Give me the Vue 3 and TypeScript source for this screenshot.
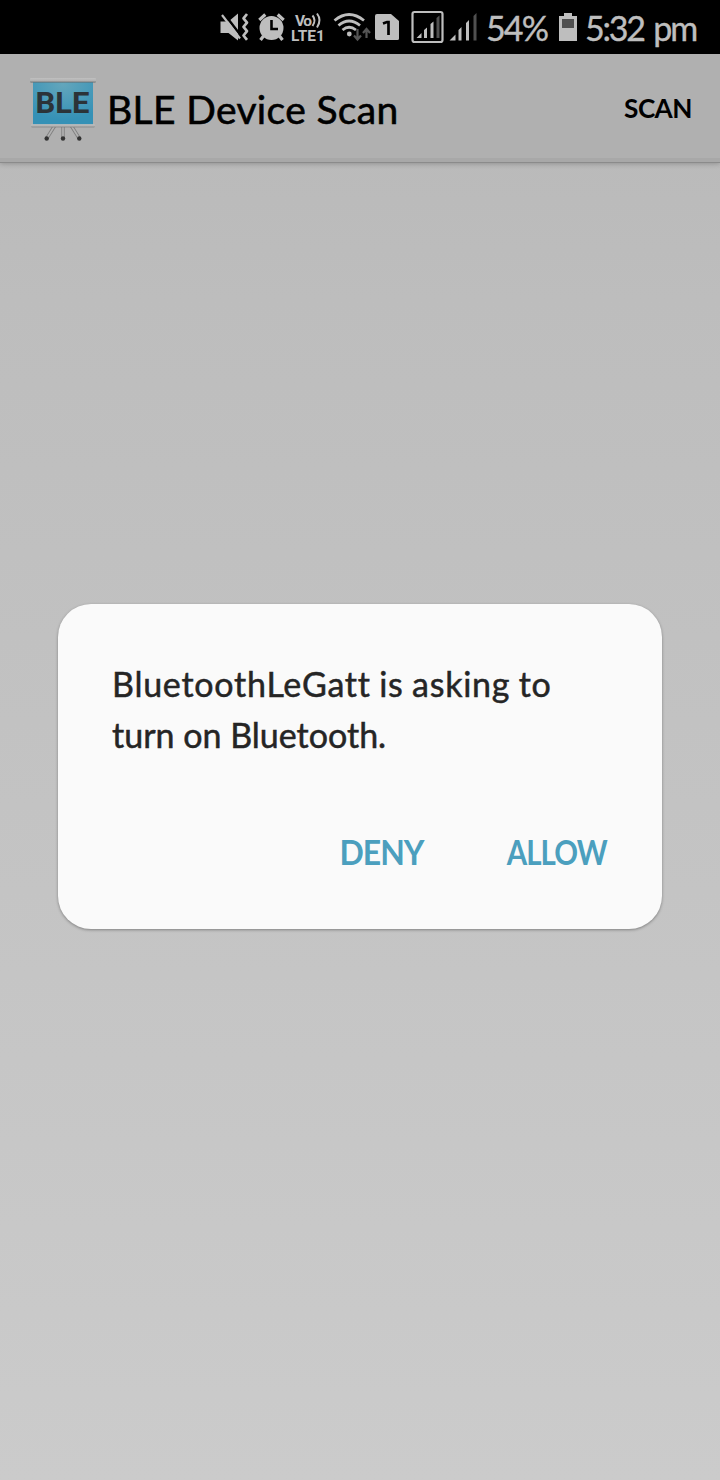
<script setup lang="ts">
import { ref } from 'vue'

const messageLines: string[] = ['BluetoothLeGatt is asking to', 'turn on Bluetooth.']
const open = ref<boolean>(true)
</script>

<template>
  <div class="screen">
    <header class="status">
      <svg class="icons" width="264" height="54" viewBox="216 0 264 54" aria-hidden="true">
        <!-- muted speaker with vibration waves -->
        <path d="M220.500 21.500h8l9.500-8v27l-9.500-7.500h-8z" fill="#bebebe" />
        <path d="M223.500 13l18 23.500" stroke="#000" stroke-width="2.500" />
        <path d="M222 15l18 23.500" stroke="#bebebe" stroke-width="2.200" />
        <path d="M247 14l-3.500 4.300 3.500 4.300-3.500 4.300 3.500 4.300-3.500 4.300 3.500 4.300" fill="none" stroke="#bebebe" stroke-width="2.700" stroke-linejoin="round" />
        <!-- alarm -->
        <circle cx="271.500" cy="28" r="12" fill="#bebebe" />
        <path d="M259.300 20l6-5.500M283.700 20l-6-5.500M263.500 36l-3 4M279.500 36l3 4" stroke="#bebebe" stroke-width="3.200" />
        <path d="M271.500 20v9h6.500" fill="none" stroke="#000" stroke-width="2.600" />
        <!-- VoLTE -->
        <text x="295" y="25.500" class="volte" textLength="17">Vo</text>
        <path d="M312.500 15.500q4 4.500 0 10.500M317 13.500q5 6.500 0 14" fill="none" stroke="#bebebe" stroke-width="2" />
        <text x="291" y="40.800" class="volte" textLength="34">LTE1</text>
        <!-- wifi -->
        <g fill="none" stroke="#bebebe" stroke-width="2.800">
          <path d="M334.500 20.500q14.500-12 29.500 0" />
          <path d="M338.500 25.500q10.500-9 21.500 0" />
          <path d="M342.500 30q6.500-5.500 13.500 0" />
        </g>
        <circle cx="349.300" cy="34" r="2.400" fill="#bebebe" />
        <path d="M357.500 29v10M354 35.500l3.500 4 3.500-4M366.500 38v-8M363 33l3.500-4 3.500 4" fill="none" stroke="#555" stroke-width="2.200" />
        <!-- SIM slot -->
        <path d="M377 14h14l8 7v17.500q0 1.500-1.500 1.500h-20.500q-2 0-2-2V16q0-2 2-2z" fill="#bebebe" />
        <path d="M383 23.500l4-1.500h1.500v13" fill="none" stroke="#000" stroke-width="2.700" />
        <!-- framed signal -->
        <rect x="412.500" y="12" width="30" height="30" rx="2" fill="none" stroke="#bebebe" stroke-width="2.200" />
        <g fill="#bebebe">
          <path d="M416.500 38l5-5v5zM424 30l3-2.500V38h-3zM430.500 24l3-2.500V38h-3z" />
          <path d="M436.500 18l3-2.500V38h-3z" fill="#505050" />
          <path d="M449.500 40.500l6-6v6zM458.500 30l3-3v13.500h-3zM466 23l3-3v20.500h-3z" />
          <path d="M473.500 16l3-3v27.500h-3z" fill="#505050" />
        </g>
      </svg>
      <span class="percent">54%</span>
      <svg class="battery" width="18" height="28" viewBox="0 0 18 28" aria-hidden="true">
        <path d="M5 0h8v3h5v25H0V3h5z" fill="#bebebe" />
        <path d="M3 6h12v9H3z" fill="#505050" />
      </svg>
      <span class="clock">5:32 pm</span>
    </header>

    <nav class="bar">
      <svg class="logo" width="68" height="68" viewBox="0 0 68 68" aria-hidden="true">
        <defs>
          <radialGradient id="board" cx=".5" cy=".1" r=".8">
            <stop offset="0" stop-color="#63a6bc" />
            <stop offset="1" stop-color="#3591b6" />
          </radialGradient>
          <linearGradient id="rail" x2="0" y2="1">
            <stop offset="0" stop-color="#c0c0c0" />
            <stop offset=".65" stop-color="#b0b0b0" />
            <stop offset="1" stop-color="#666a6c" />
          </linearGradient>
        </defs>
        <path d="M25.500 51l-7.500 12M34 51v12M42.500 51l7.500 12" stroke="#808080" stroke-width="3.400" />
        <path d="M25.500 51l-7.500 12M34 51v12M42.500 51l7.500 12" stroke="#b2b2b2" stroke-width="1.600" />
        <g fill="#333">
          <circle cx="17.700" cy="63.500" r="2.200" /><circle cx="34" cy="63.500" r="2.200" /><circle cx="50.300" cy="63.500" r="2.200" />
        </g>
        <path d="M4 5h60v44.500H4z" fill="url(#board)" />
        <rect x="1" y="3" width="66" height="4.500" rx="1" fill="url(#rail)" />
        <rect x="2" y="49.300" width="64" height="3" rx="1" fill="url(#rail)" />
        <text x="6.500" y="38" class="logo-text" textLength="54" lengthAdjust="spacingAndGlyphs">BLE</text>
      </svg>
      <h1 class="title">BLE Device Scan</h1>
      <button class="scan" type="button">SCAN</button>
    </nav>

    <main class="content">
      <section v-if="open" class="dialog" role="dialog">
        <p class="message">
          <span v-for="(line, i) in messageLines" :key="i" class="line" :class="`line-${i}`">{{ line }}</span>
        </p>
        <div class="actions">
          <button class="action deny" type="button" @click="open = false">DENY</button>
          <button class="action allow" type="button" @click="open = false">ALLOW</button>
        </div>
      </section>
    </main>
  </div>
</template>

<style>
body {
  margin: 0;
  background: #cbcbcb;
}
</style>

<style scoped>
.screen {
  width: 720px;
  height: 1480px;
  display: flex;
  flex-direction: column;
  overflow: hidden;
  font-family: Lato, "Open Sans", sans-serif;
  font-variant-ligatures: none;
  background: linear-gradient(#b7b7b7 0, #bdbdbd 300px, #cbcbcb 1480px);
}
.status {
  height: 54px;
  flex: none;
  box-sizing: border-box;
  padding-left: 216px;
  display: flex;
  background: #000;
  color: #bebebe;
  font-size: 34px;
  line-height: 56px;
  white-space: nowrap;
  -webkit-text-stroke: 0.4px currentColor;
}
.icons {
  flex: none;
}
.volte {
  font: 700 15.5px Roboto, sans-serif;
  fill: #bebebe;
  -webkit-text-stroke: 0;
}
.percent {
  width: 61px;
  margin-left: 6px;
  letter-spacing: -1.9px;
}
.battery {
  flex: none;
  margin: 13px 0 0 12px;
}
.clock {
  margin-left: 8px;
  letter-spacing: -2.2px;
  word-spacing: 3px;
}
.bar {
  height: 109px;
  flex: none;
  box-sizing: border-box;
  padding: 0 29px;
  display: flex;
  align-items: center;
  color: #000;
  background: linear-gradient(#b0b0b0 0 104px, #a8a8a8 104px 108px, #8b8b8b 108px);
  box-shadow: 0 1px 5px rgba(0, 0, 0, 0.22);
}
.logo {
  flex: none;
  margin-top: 1px;
}
.logo-text {
  font: 700 30px Roboto, sans-serif;
  fill: #2b3338;
}
.title {
  margin: 1px 0 0 10px;
  font-size: 39px;
  font-weight: 400;
  line-height: 50px;
  letter-spacing: 0.35px;
  white-space: nowrap;
  -webkit-text-stroke: 0.6px currentColor;
}
button {
  padding: 0;
  border: 0;
  background: none;
  font-family: inherit;
  white-space: nowrap;
}
.scan {
  margin: -2px 0 0 auto;
  font-size: 27px;
  font-weight: 700;
  letter-spacing: -0.6px;
  color: #000;
  transform: translateX(1px) scaleX(0.97);
  transform-origin: right;
}
.content {
  flex: 1;
  padding: 441px 58px 0;
}
.dialog {
  height: 325px;
  box-sizing: border-box;
  padding: 54px 54px 0;
  border-radius: 33px;
  background: #fafafa;
  box-shadow: 0 1px 3px rgba(0, 0, 0, 0.35);
}
.message {
  margin: 0;
  color: #252525;
  font-size: 34px;
  line-height: 51px;
  -webkit-text-stroke: 0.5px currentColor;
}
.line {
  display: block;
  white-space: nowrap;
}
.line-0 {
  letter-spacing: 0.75px;
  word-spacing: -1px;
}
.actions {
  margin-top: 67px;
  display: flex;
  justify-content: flex-end;
  gap: 69px;
}
.action {
  font-size: 34px;
  font-weight: 700;
  line-height: 50px;
  letter-spacing: -1px;
  color: #4b9fbe;
  transform-origin: right;
}
.deny {
  transform: scaleX(0.94);
}
.allow {
  transform: translateX(-1px) scaleX(0.865);
}
</style>
